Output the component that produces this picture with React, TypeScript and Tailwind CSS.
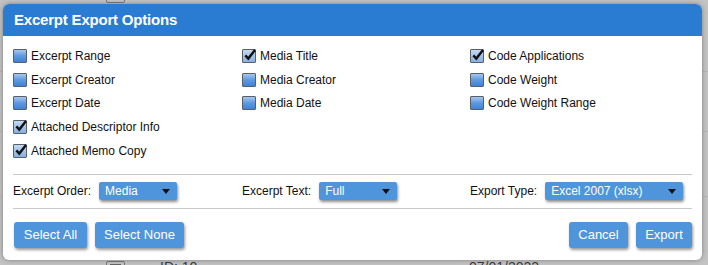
import { ReactNode } from "react";

type Option = { label: string; checked: boolean };

const columns: Option[][] = [
  [
    { label: "Excerpt Range", checked: false },
    { label: "Excerpt Creator", checked: false },
    { label: "Excerpt Date", checked: false },
    { label: "Attached Descriptor Info", checked: true },
    { label: "Attached Memo Copy", checked: true },
  ],
  [
    { label: "Media Title", checked: true },
    { label: "Media Creator", checked: false },
    { label: "Media Date", checked: false },
  ],
  [
    { label: "Code Applications", checked: true },
    { label: "Code Weight", checked: false },
    { label: "Code Weight Range", checked: false },
  ],
];

function CheckBox({ checked }: { checked: boolean }) {
  if (checked) {
    return (
      <span className="relative h-[14px] w-[14px] shrink-0 rounded-[1px] border border-[#5a5f66] bg-linear-to-b from-[#c4d8f2] to-[#86afe4]">
        <svg viewBox="0 0 14 14" className="absolute -top-[2px] left-0 h-[14px] w-[14px] overflow-visible">
          <path d="M2.3 7.4 L5.3 10.6 L12 2" fill="none" stroke="#111" strokeWidth="2.4" />
        </svg>
      </span>
    );
  }
  return (
    <span className="h-[14px] w-[14px] shrink-0 rounded-[1px] border border-[#5a5f66] bg-linear-to-b from-[#a4c7f0] via-[#5d99e0] to-[#3f83d6]" />
  );
}

function Select({ value, width }: { value: string; width: string }) {
  return (
    <div
      className={`flex h-[18px] items-center justify-between rounded-[2px] bg-[#4f95dc] pl-[6px] pr-[7px] text-[12px] text-white shadow-[1px_2px_3px_rgba(0,0,0,0.45)] ${width}`}
    >
      <span>{value}</span>
      <span className="h-0 w-0 border-x-[4px] border-t-[5px] border-x-transparent border-t-[#111]" />
    </div>
  );
}

function Button({ children, width }: { children: ReactNode; width: string }) {
  return (
    <button
      className={`h-[26px] rounded-[3px] bg-[#4f95dc] text-[13px] text-white shadow-[1px_2px_3px_rgba(0,0,0,0.4)] ${width}`}
    >
      {children}
    </button>
  );
}

export default function App() {
  return (
    <div
      className="relative h-[265px] w-[708px] overflow-hidden bg-[#c3c3c3]"
      style={{ fontFamily: '"Liberation Sans", Arial, sans-serif' }}
    >
      {/* dimmed page underneath the dialog */}
      <div className="absolute left-[106px] top-[-8px] h-[11px] w-[19px] rounded-[2px] border border-[#7a7a7a]">
        <div className="mx-[3px] mt-[6px] h-px bg-[#666]" />
      </div>
      <div className="absolute left-0 right-0 top-[71px] h-px bg-[#b6b6b6]" />
      <div className="absolute left-0 right-0 top-[131px] h-px bg-[#b6b6b6]" />
      <div className="absolute left-0 right-0 top-[196px] h-px bg-[#b6b6b6]" />
      <div className="absolute left-[106px] top-[261px] h-[11px] w-[19px] rounded-[2px] border border-[#7a7a7a]">
        <div className="mx-[3px] mt-[2px] h-px bg-[#666]" />
      </div>
      <div className="absolute left-[160px] top-[257px] text-[14px] text-[#3a3a3a]">ID: 10</div>
      <div className="absolute left-[469px] top-[257px] text-[14px] text-[#3a3a3a]">07/01/2022</div>

      {/* dialog */}
      <div className="absolute left-[3px] top-[4px] flex h-[256px] w-[699px] flex-col overflow-hidden rounded-[6px] bg-white shadow-[0_0_5px_rgba(0,0,0,0.35)]">
        <div className="flex h-[32px] shrink-0 items-center bg-[#2a7bd2] pl-[11px] text-[15px] font-bold tracking-[-0.2px] text-white">
          Excerpt Export Options
        </div>

        <div className="flex flex-1 flex-col px-[10px]">
          <div className="grid grid-cols-[229px_228px_1fr] pt-[8px]">
            {columns.map((column, ci) => (
              <div key={ci} className="flex flex-col">
                {column.map((option) => (
                  <label key={option.label} className="flex h-[23.8px] items-center gap-[4px] text-[12px] text-[#111]">
                    <CheckBox checked={option.checked} />
                    <span>{option.label}</span>
                  </label>
                ))}
              </div>
            ))}
          </div>

          <div className="mt-[11px] h-px bg-[#c9c9c9]" />

          <div className="grid h-[33px] grid-cols-[229px_228px_1fr] items-center text-[12px] text-[#111]">
            <div className="flex items-center gap-[8px]">
              <span>Excerpt Order:</span>
              <Select value="Media" width="w-[78px]" />
            </div>
            <div className="flex items-center gap-[8px]">
              <span>Excerpt Text:</span>
              <Select value="Full" width="w-[78px]" />
            </div>
            <div className="flex items-center gap-[8px]">
              <span>Export Type:</span>
              <Select value="Excel 2007 (xlsx)" width="w-[138px]" />
            </div>
          </div>

          <div className="h-px bg-[#c9c9c9]" />

          <div className="flex items-center justify-between pt-[13px]">
            <div className="flex gap-[8px] pl-px">
              <Button width="w-[73px]">Select All</Button>
              <Button width="w-[89px]">Select None</Button>
            </div>
            <div className="flex gap-[8px]">
              <Button width="w-[59px]">Cancel</Button>
              <Button width="w-[56px]">Export</Button>
            </div>
          </div>
        </div>
      </div>
    </div>
  );
}
